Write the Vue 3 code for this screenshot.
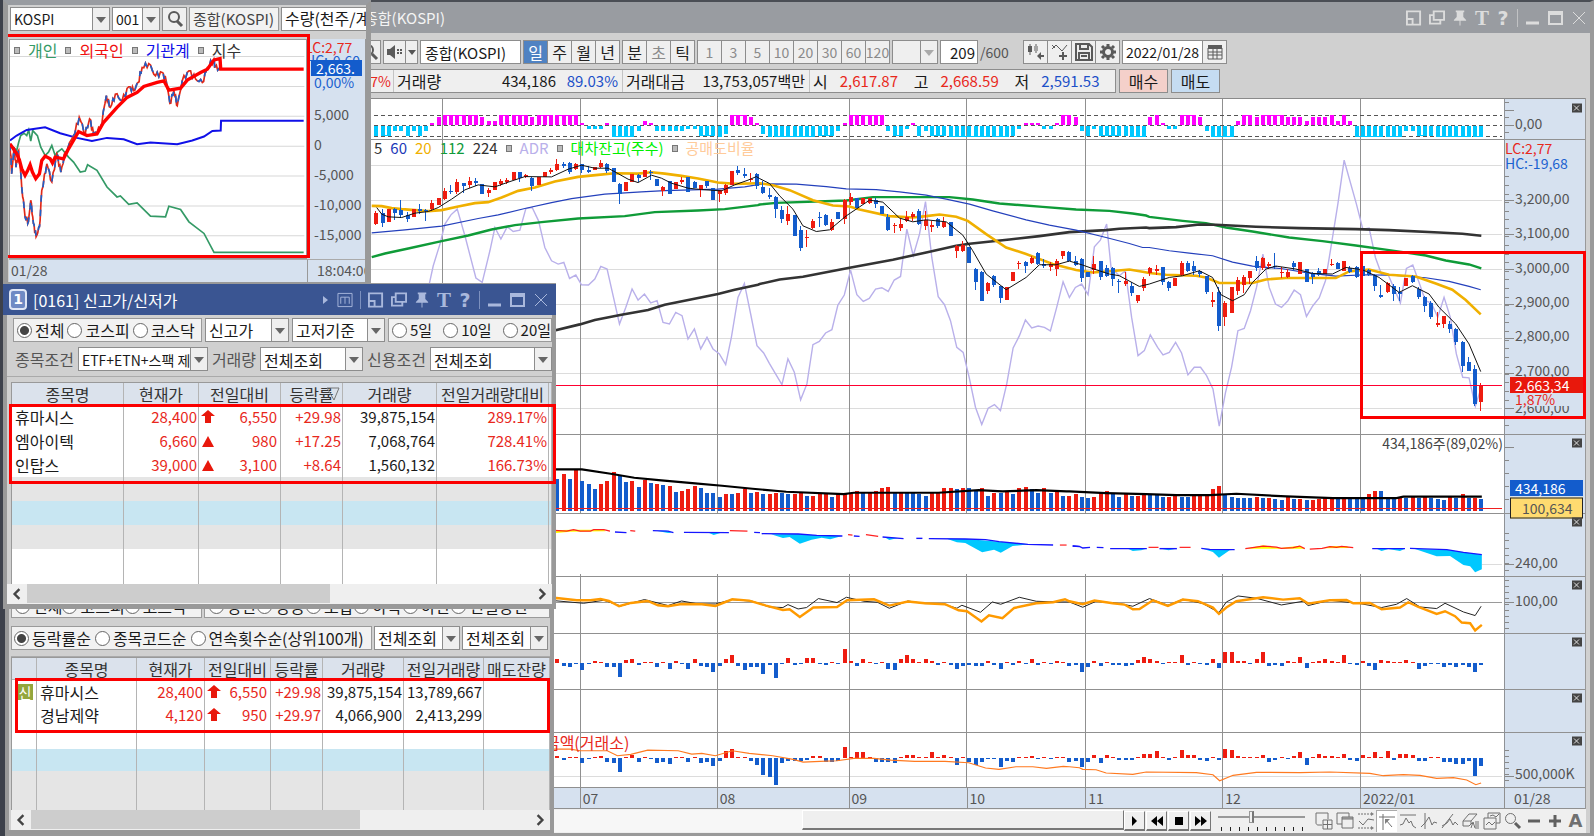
<script setup>
import { ref } from 'vue'

/* ---------- tables ---------- */
const highHead = ['종목명', '현재가', '전일대비', '등락률', '거래량', '전일거래량대비']
const highRows = [
  { name: '휴마시스', price: '28,400', limit: true, diff: '6,550', rate: '+29.98', vol: '39,875,154', ratio: '289.17%' },
  { name: '엠아이텍', price: '6,660', limit: false, diff: '980', rate: '+17.25', vol: '7,068,764', ratio: '728.41%' },
  { name: '인탑스', price: '39,000', limit: false, diff: '3,100', rate: '+8.64', vol: '1,560,132', ratio: '166.73%' }
]
const limitHead = ['', '종목명', '현재가', '전일대비', '등락률', '거래량', '전일거래량', '매도잔량']
const limitRows = [
  { badge: '신', name: '휴마시스', price: '28,400', diff: '6,550', rate: '+29.98', vol: '39,875,154', prev: '13,789,667' },
  { badge: '', name: '경남제약', price: '4,120', diff: '950', rate: '+29.97', vol: '4,066,900', prev: '2,413,299' }
]

const market = ref('전체')
const days = ref('')
const order = ref('등락률순')
const partA = ref('전체')
const partB = ref('')
const zoom = ref(38)

/* ---------- chart geometry ---------- */
const X0 = 376.3
const STEP = 6.249
const bx = i => X0 + STEP * i

/* Series are stored in tiles, about three units to a pixel. */
const tile = {
  a: [365, 140, 3], b: [760, 140, 3], c: [1150, 140, 3],
  d: [550, 420, 2.958], e: [1070, 420, 2.992]
}
const line = parts => Object.entries(parts).map(([k, s]) => {
  const [ox, oy, kx] = tile[k]
  return s.split(' ').map(p => {
    const [a, b] = p.split(',').map(Number)
    return (ox + a / kx).toFixed(1) + ',' + (oy + b / 3).toFixed(1)
  }).join(' ')
}).join(' ')

const ma20 = line({
  a: '20,195 50,196 80,202 110,205 150,208 190,211 230,208 280,197 330,187 370,184 410,170 460,150 510,140 570,122 640,108 700,102 750,97 820,98 860,94 900,98 950,105 1000,113 1060,125 1110,129 1180,127',
  b: '0,127 40,133 90,148 160,178 220,194 270,197 300,206 390,226 460,230 500,226 540,221 590,228 625,240 680,280 740,320 800,340 880,370 950,388 1000,395 1060,391 1110,386 1150,393',
  c: '0,397 50,402 140,405 170,410 210,427 310,427 350,416 410,412 560,412 600,392 660,386 720,402 800,407 860,428 910,447 950,478 995,521'
})
const ma60 = line({
  a: '20,276 120,267 230,256 340,233 400,222 480,203 560,185 620,173 720,160 830,153 900,149 1060,145 1140,138 1180,131',
  b: '30,129 110,130 200,137 260,144 350,146 420,153 500,163 560,175 630,190 700,210 800,237 870,253 950,268 1040,290 1110,308 1150,320',
  c: '0,320 60,330 120,337 190,345 250,364 310,376 400,384 480,397 560,406 650,402 740,404 830,411 900,422 960,437 995,447'
})
const ma112 = line({
  a: '20,349 60,338 130,323 230,301 310,284 380,266 450,253 530,244 640,233 780,226 870,214 1000,209 1080,205 1180,193',
  b: '0,191 50,186 260,179 340,169 570,169 640,176 720,188 850,198 950,206 1050,210 1120,218 1160,224',
  c: '0,228 100,240 170,247 230,260 310,272 420,290 520,301 620,314 720,328 830,344 890,359 960,371 997,383'
})
const ma224 = line({
  a: '560,572 645,551 690,538 770,522 850,508 900,492 1060,460 1110,447 1180,432',
  b: '0,430 60,416 130,408 270,381 400,357 500,335 590,315 630,309 750,296 840,286 930,274 1040,268 1080,264 1160,260',
  c: '0,262 80,259 150,251 200,252 320,258 450,262 620,265 720,268 870,275 940,279 997,285'
})
const ma5 = line({
  a: '35,200 50,220 70,228 110,230 150,217 190,212 220,200 260,175 300,147 340,132 390,138 430,124 480,107 560,108 610,85 650,73 690,82 730,82 760,98 790,115 820,125 860,103 890,112 920,127 970,142 1010,146 1070,150 1110,132 1150,118 1175,107',
  b: '0,113 30,128 60,165 100,205 130,255 170,272 210,267 260,225 330,178 370,184 420,232 460,243 500,237 560,243 610,283 640,330 680,400 740,447 800,410 840,372 890,372 930,361 970,373 1010,387 1050,400 1080,405 1140,437',
  c: '0,430 60,410 100,405 150,390 190,410 215,462 250,480 285,462 310,425 350,385 380,376 440,385 490,398 550,400 590,380 640,387 690,410 750,455 790,435 840,460 870,500 920,550 960,610 995,693'
})
const adr = line({
  a: '193,430 205,375 225,310 240,250 258,222 277,205 300,285 333,412 352,425 375,330 390,260 408,295 427,258 445,272 465,268 483,203 502,200 521,240 540,320 560,360 580,370 597,365 614,413 633,403 650,432 671,433 690,415 708,377 727,385 746,470 764,550 783,500 802,445 820,478 839,460 858,487 877,480 895,545 914,550 933,515 952,525 970,595 989,565 1008,625 1027,590 1045,625 1064,640 1083,672 1100,590 1120,470 1139,428 1158,520 1177,615',
  b: '12,637 29,668 67,732 85,655 104,695 123,778 142,730 160,612 179,602 198,577 217,567 235,493 254,463 273,388 292,462 311,482 329,473 348,445 367,441 386,452 404,418 423,407 442,265 461,345 480,280 498,182 517,350 536,468 555,492 573,540 592,620 611,635 629,710 648,800 667,852 686,803 705,792 723,810 742,730 761,622 780,585 798,538 817,562 836,556 855,560 873,571 892,500 911,423 930,470 948,440 967,430 986,462 1005,318 1023,298 1042,250 1055,380 1080,405 1098,390 1117,530 1136,645 1155,630',
  c: '3,583 25,620 41,643 60,635 79,605 97,637 116,703 135,680 154,680 172,705 191,745 210,857 229,755 247,680 266,570 285,563 304,510 322,440 341,340 360,440 379,490 397,500 416,480 435,448 454,462 472,527 491,495 510,472 529,420 547,310 566,190 585,58 622,190 641,265 660,262 679,350 697,400 716,400 754,487 772,383 791,373 810,425 829,480 847,487 866,530 885,470 904,530 922,640 941,710 960,712 979,797 997,740'
})

/* colour, body top, body bottom, high, low */
const candles = `r215,250,210,252 b215,247,205,258 r203,243 b204,217,200,237 b206,222,178,232 b222,235,212,243 r204,229 b205,210,190,220 b206,211,203,240 r187,205,178,210 r170,193 r150,174,142,178 b151,154,133,160 r123,153,114,158 b127,135,125,155 r121,131,108,140 b121,127,112,135 b128,160 r148,156,140,167 r124,148 r121,128,115,135 r117,124,112,130 r94,116 b94,110,93,122 r103,108,100,112 b110,135,108,150 r109,131 r93,109 r87,93,82,98 r68,86,53,90 b68,74,62,82 b66,92,64,98 r68,84,66,87 b70,88,68,97 b87,92,75,97 r77,88 r65,79,57,82 b68,90,66,95 b82,122 b128,160,126,190 r122,149 r100,123 b101,110,100,124 r88,107 b92,97,88,118 b113,135 r138,150,136,165 b121,160 r122,143 r116,124,108,130 b107,152 b124,140,120,142 r133,147,131,168 b121,135,120,140 b140,176 r148,158,147,183 r132,155,130,163 r90,132 b88,95,74,103 b98,104,82,110 r113,118,96,123 b98,135,97,145 b138,157,120,160 b161,168,142,174 b168,205,165,232 b207,235,195,247 r218,240,195,253 b222,285 b267,322,255,332 r288,293,268,318 r240,263,235,265 b228,232,214,260 b224,253,218,257 r245,267,235,272 b212,236 r176,235,175,250 r167,183,157,192 b172,202 r172,190 r172,186,170,190 b176,190,172,202 b194,218 b230,267,220,270 r252,257,248,277 r250,262,235,272 r230,240,210,243 r220,230,213,240 b210,250,205,252 r237,255,210,268 r253,258,240,275 b236,257,232,263 r245,260,228,262 b245,285 r315,330,312,352 r312,330,300,335 b320,368 b384,425,382,447 b395,480,390,480 r426,450,425,460 b406,432,404,440 b436,472,435,488 r440,477 r395,420 r368,371,360,385 b365,377,362,397 r352,367,345,370 b338,370,333,373 b370,377,355,383 r371,380,365,390 r361,385,355,405 r331,345,331,355 b334,361,331,363 b362,372,345,377 b355,413,352,423 b395,408 r370,388,345,400 b361,410,360,417 b382,405,372,410 b382,415,380,435 b420,425,415,457 r420,430,395,435 b437,457,425,465 r462,480,462,488 r415,443,410,450 r382,397,380,407 r386,390,372,402 b380,423,378,432 b424,443,420,450 r412,437 r368,403,362,405 b368,390,362,395 b376,390,362,402 b390,400,388,410 b407,453,405,460 r478,483,453,498 b455,555,440,570 r487,530,480,555 r440,517 r417,452,408,462 r408,432,402,457 r392,412,390,430 b361,383,345,390 r352,382,350,387 r371,377,365,385 b375,380,338,385 r393,398,380,412 r393,408,385,412 b368,378,362,390 r365,400 b384,423 b400,410,395,430 b390,402,383,405 r385,400 r370,374,355,376 b368,384,365,386 r361,390 b381,395,375,397 b380,408,375,412 b375,405,370,410 b388,403,385,405 b402,435,400,450 b462,468,432,473 r426,455,423,458 b435,460,430,480 b455,460,440,480 r413,437 b405,424,402,427 b445,468,440,475 b468,497,465,515 b486,528,482,535 r546,552,515,560 r526,550,525,562 b550,564,540,577 b565,603,563,613 b603,675,600,693 b663,690,650,690 b685,790,672,797 r733,783,728,810`
  .split(' ').map((s, i) => {
    const [t, b, h = t, l = b] = s.slice(1).split(',').map(Number)
    return { up: s[0] === 'r', x: bx(i), t: 140 + t / 3, b: 140 + b / 3, h: 140 + h / 3, l: 140 + l / 3 }
  })

/* signal strip: [height, count] */
const signal = [[-10, 3], [-5, 2], [-10, 1], [-5, 1], [-10, 1], [-5, 1], [2, 1], [8, 1], [10, 6], [8, 1], [4, 2], [10, 5], [8, 1], [10, 7], [2, 1], [-3, 3], [2, 1], [-11, 4], [-5, 1], [4, 1], [2, 1], [-5, 5], [-3, 2], [-10, 3], [-11, 1], [-8, 1], [10, 3], [8, 1], [2, 1], [-8, 1], [-11, 8], [-10, 3], [-5, 1], [2, 1], [10, 6], [-5, 1], [-10, 2], [-3, 1], [2, 1], [-10, 1], [-5, 1], [-10, 3], [-11, 10], [-10, 1], [-3, 1], [2, 3], [-3, 2], [2, 1], [10, 2], [8, 1], [-5, 1], [-10, 1], [-3, 1], [-10, 5], [-11, 3], [8, 1], [10, 1], [2, 1], [-3, 2], [10, 3], [8, 1], [-5, 1], [-11, 4], [4, 1], [10, 2], [8, 1], [10, 4], [8, 3], [4, 1], [8, 3], [10, 1], [4, 1], [10, 1], [4, 1], [-11, 8], [-5, 2], [-10, 3], [-11, 8]]
  .flatMap(([v, n]) => Array(n).fill(v))
  .map((v, i, all) => ({ v, x: bx(i), join: Math.abs(v) >= 10 && all[i + 1] === v && i % 7 !== 0 }))

/* volume bars start at the 30th session */
const volume = `b177 r162 b177 r150 b181 b192 b207 r192 r181 r155 b168 b184 r181 b199 r179 b188 r190 b195 r196 b214 r211 r207 r196 b204 b218 b218 b230 r222 b222 r219 r207 b219 r214 b222 r222 r219 b218 b222 r222 r218 b226 r226 r219 r219 b230 r222 r220 r220 r211 b219 r219 r211 r203 r199 b219 r219 b219 b219 b222 b226 r219 r219 r203 r203 b207 r203 b203 b208 r203 b226 r219 b218 r214 b222 r203 r199 b207 b219 r203 b219 r211 b226 r226 r222 b229 b234 r229 r219 r211 b219 b229 r219 b226 r226 r222 b222 b225 b229 r229 r226 b229 b229 r225 r226 r226 r207 r196 b222 b229 b234 b234 b234 r229 b234 r234 b237 b240 r229 b237 r237 b240 r240 r237 r234 r230 b234 r230 b230 b230 b232 r222 r211 b211 b234 b237 r230 b234 r230 b234 r230 b234 b237 b240 r230 b234 r222 b234 r234 b237`
  .split(' ').map((s, i) => ({ up: s[0] === 'r', x: bx(i + 29), y: 420 + s.slice(1) / 3 }))

const volumeAvg = line({
  d: '0,147 95,147 180,160 250,172 330,180 430,189 510,196 600,205 700,214 870,221 900,217 1150,217 1270,209 1340,213 1440,209 1530,213',
  e: '0,213 110,218 230,221 320,224 420,224 500,220 650,228 790,233 980,233 1000,229 1235,229'
})

const flowBars = (list, zero) => list.map((v, i) => ({
  up: v > 0, x: bx(i + 29), y: v > 0 ? zero - v / 3 : zero, h: Math.max(1, Math.abs(v) / 3)
}))
const flowA = flowBars([13, -8, -12, -2, -20, -2, 8, 5, -12, -12, -43, 9, 13, -6, 4, 4, -12, 4, -17, 8, -2, -16, 13, -8, -10, -28, -9, 13, 25, -9, -20, -12, -12, -32, -5, -46, -2, 17, -6, -2, 17, 17, -2, -5, 4, -2, 43, 8, -9, 13, 5, -3, 4, -17, -20, 13, 25, 13, 5, 13, 8, -5, 3, -5, -17, -9, -5, -8, -8, 8, -5, -17, 4, -5, 8, -2, 13, -5, 5, -3, 8, 4, -8, -6, -28, -12, 8, -9, 4, -5, -5, -8, -5, 9, 20, 13, 8, -2, 4, 4, 25, -5, 4, -2, -5, 13, -13, 33, 33, 8, 8, -2, 13, 33, -9, -5, -9, 8, 4, 20, -13, 4, 8, 13, 8, 4, 25, -2, -5, 8, -8, -20, 9, 8, 4, 4, 9, 4, -16, -8, -2, -2, -12, -5, -12, -5, -12, -28, -5], 663)
const flowB = flowBars([5, -5, 3, 3, -16, -4, 3, 5, -13, -16, -42, 3, 10, -13, 3, -4, -16, -13, -17, 3, 3, -13, 3, -16, -13, -24, -8, 20, 28, 3, 3, -8, -20, -50, -58, -80, -16, -8, -9, -10, -5, 5, 5, -13, -13, -10, 33, 3, 17, 17, 3, -13, -13, -13, -16, 4, 9, 9, 3, 3, 17, 3, 9, 3, -20, 3, -13, -20, -13, -4, -4, -28, -9, -13, 3, 3, 5, -4, 3, -4, 3, 3, -12, -10, -28, -12, 9, -16, 9, 3, -5, -5, -5, 3, 13, 13, 21, 3, -5, 4, 25, 9, 9, -5, -9, 3, -5, 28, 25, 5, 3, 4, 3, 9, -12, -5, 3, -4, 5, 17, -20, 3, 13, 5, 5, 4, 13, -5, -9, 9, 4, 17, 3, 21, -5, 13, 13, 9, -9, -9, 3, 3, -13, -12, -17, -17, -9, -55, -24], 758)

const ratioOrange = line({
  d: '0,534 20,533 80,540 120,540 150,536 175,542 205,558 240,548 290,542 320,555 350,558 390,551 450,552 490,557 540,537 590,541 640,556 690,569 710,567 740,590 780,562 850,560 880,540 960,537 1005,556 1060,544 1110,549 1170,552 1210,570 1235,573 1278,604 1300,585 1340,594 1375,563 1440,549 1490,546 1525,537',
  e: '0,543 40,552 75,541 130,549 165,553 190,567 210,566 250,540 295,557 340,538 385,543 430,562 448,581 470,562 500,543 580,531 640,538 690,534 715,550 780,540 830,539 850,549 900,548 935,567 990,562 1015,546 1045,560 1100,581 1125,573 1155,588 1175,607 1200,609 1215,631 1235,614'
})
const ratioBlack = line({
  d: '0,540 100,549 160,540 210,557 280,538 350,556 390,542 440,551 490,551 540,538 600,543 650,560 690,562 705,553 735,566 760,562 795,535 850,547 878,531 930,543 970,546 1005,564 1060,542 1110,550 1160,550 1205,564 1220,555 1275,576 1310,545 1335,552 1390,531 1440,543 1500,545',
  e: '0,545 40,561 80,543 150,550 190,558 240,535 295,555 340,537 400,550 448,577 470,545 505,527 560,534 635,554 700,543 715,556 780,540 870,550 935,562 980,552 1010,535 1050,560 1100,565 1125,549 1180,575 1215,586 1233,558'
})
const netOrange = line({
  d: '0,987 60,987 90,992 170,992 200,1007 240,1003 290,990 380,992 420,1002 450,1000 490,1007 540,992 590,1000 660,1007 720,1018 750,1026 800,1024 850,1022 900,1015 960,1015 1010,1020 1080,1024 1170,1024 1240,1028 1290,1044 1330,1048 1380,1040 1430,1040 1470,1045 1520,1039',
  e: '0,1040 30,1043 40,1048 80,1049 110,1059 190,1063 230,1056 380,1058 430,1064 450,1082 490,1066 560,1057 690,1058 780,1056 900,1060 940,1067 1000,1064 1050,1066 1100,1075 1150,1073 1190,1080 1217,1094 1233,1089'
})

const coolAreas = [
  { d: '655,342 690,353 710,350 740,370 775,358 805,352 830,357 865,347 790,345 735,341' },
  { d: '1175,355 1205,366 1230,368 1280,396 1315,388 1335,397 1370,377 1420,372 1330,364 1235,356' },
  { d: '315,331 350,338 362,337 345,331' }, { d: '990,350 1005,359 1030,353' }, { d: '470,337 485,344 505,338' },
  { e: '175,385 190,392 215,390 230,385' }, { e: '400,385 430,395 448,412 480,390 495,388' },
  { e: '275,385 297,390 320,385' }, { e: '920,385 935,392 955,386 990,392 1005,385' },
  { e: '1035,386 1100,408 1140,407 1180,434 1200,438 1215,456 1235,447 1235,403 1180,396 1130,388' }
].map(line)
const warmAreas = [{ d: '0,330 70,328 160,328 165,333 60,334 20,338 0,338' }, { e: '527,385 580,375 630,383 690,376 705,385' }, { e: '760,384 785,377 830,377 840,383' }].map(line)
const blueRuns = [{ d: '193,335 227,337' }, { d: '305,331 350,332 366,337' }, { d: '397,336 530,337' }, { d: '605,336 622,337' }, { d: '627,340 735,341 790,345 866,347' }, { d: '900,347 917,348' }, { d: '985,350 1047,355' }, { d: '1085,354 1103,354' }, { d: '1122,355 1230,356 1290,358 1330,364 1415,372 1490,374' }, { d: '1548,377 1568,379' }, { e: '10,377 30,378 40,383 62,381' }, { e: '82,381 102,382' }, { e: '122,385 232,385' }, { e: '270,385 322,385' }, { e: '395,384 420,387 495,388' }, { e: '907,385 1005,385' }, { e: '1020,384 1130,388 1180,396 1235,403' }].map(line)
const redRuns = [{ d: '0,329 50,332 70,328 90,332 120,332 130,328 160,328 178,332' }, { d: '238,331 253,332' }, { d: '533,331 585,332' }, { d: '883,343 896,344' }, { d: '936,343 972,348' }, { d: '1510,374 1530,374' }, { e: '237,381 267,381' }, { e: '330,381 363,381' }, { e: '527,385 580,377 620,380 635,384 670,382 690,377 705,385' }, { e: '720,386 757,384 780,379 800,381 815,378 850,382' }].map(line)

const months = [442, 580, 717, 849, 967, 1086, 1223, 1361]
const monthLabels = [[580, '07'], [717, '08'], [849, '09'], [967, '10'], [1086, '11'], [1223, '12'], [1361, '2022/01']]
const grid = [164, 199, 233, 268, 303, 337, 372, 407]
const seams = [138, 433, 513, 576, 633, 689, 732]

const axisLabels = [
  [122, '0,00'], [197, '3,200,00'], [231, '3,100,00'], [266, '3,000,00'], [300, '2,900,00'], [334, '2,800,00'],
  [369, '2,700,00'], [406, '2,600,00'], [562, '240,00'], [600, '100,00'], [773, '500,000K']
]
const closers = [107, 442, 522, 585, 642, 698, 741]
const pct = y => ((y - 98) / 689 * 100).toFixed(2) + '%'
const range = (a, b, s) => Array.from({ length: Math.floor((b - a) / s) + 1 }, (_, i) => a + i * s)
const minor = [...range(102, 132, 7.5), ...range(176, 430, 8.6), ...range(447, 508, 13), ...range(533, 573, 7.5), ...range(580, 630, 6), ...range(750, 785, 6)]
const major = [109, 124, 199, 233, 268, 303, 337, 372, 407, 447, 564, 602, 776]

/* ---------- investor chart, three units to a pixel ---------- */
const idx = '30,430 35,520 42,440 48,500 56,450 65,560 75,650 85,665 92,600 100,670 108,710 118,680 125,570 140,490 155,545 170,460 182,515 195,455 220,405 237,350 255,400 268,355 280,400 300,385 318,285 330,320 345,280 365,300 385,258 400,270 413,245 425,200 445,188 465,225 485,215 497,240 508,308 520,270 530,315 545,240 565,210 585,235 605,245 620,200 640,175 642,200 660,205'
  .split(' ').map(p => p.split(',').map(Number))
const indexLine = idx.flatMap(([x, y], i) => {
  const n = idx[i + 1]
  if (!n) return [[x, y]]
  return [0, 1, 2, 3].map(k => [x + (n[0] - x) * k / 4, y + (n[1] - y) * k / 4 + (k ? 9 * Math.sin(i * 7.3 + k * 2.6) : 0)])
}).map(p => p.map(v => v.toFixed(0)).join(',')).join(' ')
const avgLine = '30,430 50,460 58,478 65,505 75,525 82,512 90,493 97,515 107,535 118,520 125,480 135,467 150,475 157,488 165,470 190,475 205,445 235,393 260,405 290,400 310,365 350,320 380,290 410,275 430,257 470,245 490,240 505,268 540,262 560,238 600,215 620,205 640,177 658,173 660,205 908,205'
const instLine = '30,420 50,405 80,388 135,380 180,398 230,412 275,421 320,412 370,416 410,431 450,426 530,431 575,420 610,408 635,391 660,390 661,360 908,360'
const personLine = '32,432 50,450 56,425 62,405 72,398 80,405 86,388 92,422 98,390 112,405 122,440 135,465 145,455 155,435 165,465 172,455 185,445 205,470 220,485 240,515 255,512 262,493 290,510 320,560 350,590 360,587 385,612 410,608 450,648 495,650 505,618 540,628 565,665 610,700 640,757 908,757'
const miniLabels = [[114, '5,000'], [144, '0'], [174, '-5,000'], [204, '-10,000'], [234, '-15,000']]

/* ---------- toolbar ---------- */
const periods = ['일', '주', '월', '년']
const units = ['분', '초', '틱']
const steps = ['1', '3', '5', '10', '20', '30', '60', '120']

const winIcons = {
  restore: 'M1 8V1h14v14H8M1 9h6v6H1z',
  copy: 'M5 1h11v9H5zM5 5H1v9h11v-4',
  max: 'M1 2h13v12H1zM1 4h13',
  min: 'M1 13h13',
  close: 'M2 2l12 12M14 2L2 14'
}
const tools = [
  { name: '창 추가', d: 'M7 13H3c-1 0-2-1-2-2V1h12v6M8 8h9v9H8zM12.500 8v9M8 12.500h9' },
  { name: '창 겹치기', d: 'M6 12H1V1h12v4M6 5h11v11H6zM6 7h11M6 6h11' },
  { name: '영역', d: 'M2 9l4 4 5-6 6 1', dash: 'M1 2h15M1 16h15', head: 'M14 0l3 2-3 2zM14 14l3 2-3 2z' },
  { name: '기준선', d: 'M5 1v16M1 4h16M8 7l6 7', head: 'M7 6h5l-5 5z', on: true },
  { name: '수평선', d: 'M1 3h16M1 13l3-1 3-6 3 5 2-2 2 5 3 2' },
  { name: '수직선', d: 'M5 1v16M1 15l4-4 4-6 3 8 2-3 3 1' },
  { name: '추세선', d: 'M1 16L12 2M1 14l5-3 3-4 3 6 2-3 3 3' },
  { name: '전체 지우기', d: 'M1 9l6-7h8l-6 7zM1 9v5h6l3-3M9 9v3M9 16l2-6 2 6M14 9v8M16 9v8' },
  { name: '그림', d: 'M5 6V1h12v10h-4M1 6h12v11H1zM3 13l3-3 3 3 3-3M7 4l3-1 3 2 3-3' },
  { name: '돋보기', d: 'M11.500 6.500a5 5 0 1 1-10 0 5 5 0 0 1 10 0z', mid: 'M11 11l5 5' },
  { name: '축소', thick: 'M3 9h12' },
  { name: '확대', thick: 'M3 9h12M9 3v12' }
]
</script>

<template>
  <div class="desktop">
    <!-- chart window -->
    <section class="win chart-win">
      <header class="bar chart-title">
        <h1>종합(KOSPI)</h1>
        <div class="ctl">
          <button aria-label="창 복원"><svg viewBox="0 0 17 16"><path :d="winIcons.restore" /></svg></button>
          <button aria-label="창 복사"><svg viewBox="0 0 17 16"><path :d="winIcons.copy" /></svg></button>
          <button aria-label="고정"><svg viewBox="0 0 17 16"><path class="fill" d="M4 0h9v2h-1v5l3 3v1H9v5H8v-5H2v-1l3-3V2H4z" /></svg></button>
          <button class="serif">T</button>
          <button class="quest">?</button>
          <i class="sep"></i>
          <button aria-label="최소화"><svg viewBox="0 0 16 16"><path class="thick" :d="winIcons.min" /></svg></button>
          <button aria-label="최대화"><svg viewBox="0 0 16 16"><path :d="winIcons.max" /></svg></button>
          <button aria-label="닫기"><svg viewBox="0 0 16 16"><path class="thin" :d="winIcons.close" /></svg></button>
        </div>
      </header>

      <div class="toolbar">
        <button class="tb w23" aria-label="검색"><svg viewBox="0 0 18 18"><circle cx="7" cy="7" r="5" /><path d="M11 11l5 5" stroke-width="3" /></svg></button>
        <span class="joined">
          <button class="tb w23" aria-label="소리"><svg viewBox="0 0 18 18"><path class="fill" d="M1 6h3l5-4v14l-5-4H1z" /><path stroke-dasharray="2 1" d="M11 7h6M11 10h6" /></svg></button>
          <button class="tb w12" aria-label="소리 메뉴"><i class="down"></i></button>
        </span>
        <input class="box name" aria-label="종목명" value="종합(KOSPI)" />
        <span class="joined">
          <button v-for="(p, i) in periods" :key="p" class="tb w24" :class="{ on: i === 0 }">{{ p }}</button>
        </span>
        <span class="joined">
          <button v-for="p in units" :key="p" class="tb w24" :class="{ dim: p === '초' }">{{ p }}</button>
        </span>
        <span class="joined nums">
          <button v-for="p in steps" :key="p" class="tb w24 dim">{{ p }}</button>
        </span>
        <span class="sel off w44"><select aria-label="주기" disabled><option></option></select><i></i></span>
        <input class="box count" aria-label="표시 개수" value="209" />
        <span class="total">/600</span>
        <span class="joined icons">
          <button class="tb w24" aria-label="차트 추가"><svg viewBox="0 0 18 18"><path d="M3 1v11M9 1v9" stroke-width="1" /><path class="fill" d="M1 3h4v6H1z" /><path class="soft" d="M7 3h4v5H7z" /><path d="M17 13h-4" stroke-width="2" /><path class="fill" d="M10 13l4-4v8z" /></svg></button>
          <button class="tb w24" aria-label="지표 추가"><svg viewBox="0 0 18 18"><path class="hair" d="M1 6l4-4 6 6 5-6M1 2l3 3" /><path d="M12 9v8M8 13h8" /></svg></button>
          <button class="tb w24" aria-label="저장"><svg viewBox="0 0 18 18"><path d="M1 1h13l3 3v13H1zM5 1v5h8V1M4 17v-7h10v7M6 13h6" /></svg></button>
          <button class="tb w24" aria-label="설정"><svg viewBox="0 0 18 18"><g class="gear"><circle cx="9" cy="9" r="4.500" /><path d="M9 1v3M9 14v3M1 9h3M14 9h3M3 3l2 2M13 13l2 2M15 3l-2 2M3 15l2-2" /></g></svg></button>
        </span>
        <span class="joined">
          <input class="box date" aria-label="날짜" value="2022/01/28" />
          <button class="tb w24" aria-label="달력"><svg viewBox="0 0 18 18"><path class="fill" d="M2 2h14v4H2z" /><path class="hair" d="M2 5v11h14V5M2 9h14M2 12h14M7 5v11M11 5v11" /></svg></button>
        </span>
      </div>

      <div class="info-row">
        <dl class="info">
          <div class="c1"><dt class="red">1.87%</dt></div>
          <div class="c2"><dt>거래량</dt><dd>434,186</dd><dd class="blue">89.03%</dd></div>
          <div class="c3"><dt>거래대금</dt><dd>13,753,057백만</dd></div>
          <div class="c4"><dt>시</dt><dd class="red">2,617.87</dd><dt>고</dt><dd class="red">2,668.59</dd><dt>저</dt><dd class="blue">2,591.53</dd></div>
        </dl>
        <button class="trade buy">매수</button>
        <button class="trade sell">매도</button>
      </div>

      <div class="chart">
        <div class="plot">
          <svg viewBox="371 98 1134 689" preserveAspectRatio="none">
            <g class="crisp">
              <path v-for="y in grid" :key="'g' + y" class="grid" :d="`M371 ${y + .5}H1503`" />
              <path class="grid" d="M1483 564.500h20M371 776.500H1503" />
              <path class="midline" d="M371 602.500H1503" />
              <path v-for="y in seams" :key="'s' + y" class="seam" :d="`M371 ${y + .5}H1505`" />
              <path v-for="x in months" :key="'m' + x" class="seam" :d="`M${x + .5} 98V513M${x + .5} 574V787`" />
              <path class="dash" d="M374 114.500H1503M374 124.500H1503M374 135.500H1503" />
              <g v-for="(s, i) in signal" :key="'n' + i" :class="s.v > 0 ? 'mag' : 'cyan'">
                <rect :x="s.x - 2" :y="s.v > 0 ? 124 - s.v : 125" width="4" :height="Math.abs(s.v)" />
                <rect v-if="s.join" :x="s.x" :y="s.v > 0 ? 114 : 124 - s.v" :width="STEP" height="1" />
              </g>
            </g>
            <polyline class="adr" :points="adr" />
            <polyline class="m112" :points="ma112" />
            <polyline class="m224" :points="ma224" />
            <polyline class="m60" :points="ma60" />
            <polyline class="m20" :points="ma20" />
            <g class="crisp">
              <g v-for="(c, i) in candles" :key="'c' + i" :class="c.up ? 'up' : 'dn'">
                <rect :x="c.x - 2" :y="c.t" width="4" :height="c.b - c.t" />
                <rect :x="c.x - 1" :y="c.h" width="1" :height="c.l - c.h" />
              </g>
            </g>
            <polyline class="m5" :points="ma5" />
            <path class="last crisp" d="M371 384.500H1503" />

            <g class="crisp">
              <rect v-for="(v, i) in volume" :key="'v' + i" :class="v.up ? 'up' : 'dn'" :x="v.x - 2" :y="v.y" width="4" :height="511 - v.y" />
              <path class="vline" d="M371 508.500H1503" />
            </g>
            <polyline class="vavg" :points="volumeAvg" />

            <polygon v-for="(a, i) in coolAreas" :key="'ca' + i" class="cyan" :points="a" />
            <polygon v-for="(a, i) in warmAreas" :key="'wa' + i" class="yel" :points="a" />
            <polyline v-for="(a, i) in blueRuns" :key="'br' + i" class="brun" :points="a" />
            <polyline v-for="(a, i) in redRuns" :key="'rr' + i" class="rrun" :points="a" />

            <polyline class="rblack" :points="ratioBlack" />
            <polyline class="rorange" :points="ratioOrange" />

            <g class="crisp">
              <rect v-for="(v, i) in flowA" :key="'fa' + i" :class="v.up ? 'up' : 'dn'" :x="v.x - 2" :y="v.y" width="4" :height="v.h" />
              <rect v-for="(v, i) in flowB" :key="'fb' + i" :class="v.up ? 'up' : 'dn'" :x="v.x - 2" :y="v.y" width="4" :height="v.h" />
            </g>
            <polyline class="norange" :points="netOrange" />
          </svg>
          <div class="legend main-legend">
            <span>5</span><span class="l60">60</span><span class="l20">20</span><span class="l112">112</span><span>224</span>
            <i></i><span class="ladr">ADR</span><i></i><span class="llend">대차잔고(주수)</span><i></i><span class="lshort">공매도비율</span>
          </div>
          <span class="vol-note">434,186주(89,02%)</span>
          <span class="net-note">순매수금액(거래소)</span>
        </div>
        <div class="axis">
          <svg viewBox="0 98 81 689" preserveAspectRatio="none" class="crisp">
            <path v-for="y in minor" :key="'a' + y" class="tick" :d="`M0 ${y}h4`" />
            <path v-for="y in major" :key="'b' + y" class="tick" :d="`M0 ${y + .5}h9`" />
            <path v-for="y in seams" :key="'s' + y" class="seam" :d="`M0 ${y + .5}h81`" />
          </svg>
          <span v-for="l in axisLabels" :key="l[1]" class="lab" :style="{ top: pct(l[0]) }">{{ l[1] }}</span>
          <span class="lab edge red" :style="{ top: pct(147) }">LC:2,77</span>
          <span class="lab edge blue" :style="{ top: pct(162) }">HC:-19,68</span>
          <span class="lab rate" :style="{ top: pct(398) }">1,87%</span>
          <span class="tag tag-red" :style="{ top: pct(384) }">2,663,34</span>
          <span class="tag tag-blue" :style="{ top: pct(488) }">434,186</span>
          <span class="tag tag-yellow" :style="{ top: pct(508) }">100,634</span>
          <button v-for="y in closers" :key="y" class="mini-x" aria-label="지표 닫기" :style="{ top: pct(y) }"><svg viewBox="0 0 10 9"><path d="M2 2l5 5M7 2L2 7" /></svg></button>
        </div>
        <div class="dates">
          <span v-for="m in monthLabels" :key="m[1]" :style="{ left: ((m[0] - 371) / 1134 * 100).toFixed(2) + '%' }">{{ m[1] }}</span>
        </div>
        <div class="today">01/28</div>
        <div class="mark mark-chart"></div>
      </div>

      <footer class="foot">
        <div class="track"><div class="thumb"></div></div>
        <div class="play">
          <button aria-label="재생"><svg viewBox="0 0 16 16"><path d="M5 3l5 5-5 5z" /></svg></button>
          <button aria-label="뒤로"><svg viewBox="0 0 16 16"><path d="M8 3v10L2 8zM14 3v10L8 8z" /></svg></button>
          <button aria-label="정지"><svg viewBox="0 0 16 16"><path d="M4 4h8v8H4z" /></svg></button>
          <button aria-label="앞으로"><svg viewBox="0 0 16 16"><path d="M2 3v10l6-5zM8 3v10l6-5z" /></svg></button>
        </div>
        <div class="slide"><input v-model="zoom" type="range" min="0" max="100" aria-label="확대 비율" /></div>
        <div class="tools">
          <button v-for="t in tools" :key="t.name" :aria-label="t.name" :class="{ pressed: t.on }">
            <svg viewBox="0 0 18 18">
              <path v-if="t.d" :d="t.d" />
              <path v-if="t.dash" :d="t.dash" stroke-dasharray="2 1" />
              <path v-if="t.head" class="fill" :d="t.head" />
              <path v-if="t.mid" class="thick" :d="t.mid" />
              <path v-if="t.thick" class="thick" :d="t.thick" />
            </svg>
          </button>
          <button class="letter">A</button>
        </div>
      </footer>
    </section>

    <!-- limit-price window -->
    <section class="win limit-win">
      <div class="row">
        <div class="group g1">
          <label v-for="o in ['전체', '코스피', '코스닥']" :key="o"><input v-model="partA" type="radio" name="pa" value="" />{{ o }}</label>
        </div>
        <div class="group g2">
          <label v-for="o in ['상한', '상승', '보합', '하락', '하한', '전일상한']" :key="o"><input v-model="partB" type="radio" name="pb" :value="o" />{{ o }}</label>
        </div>
      </div>
      <div class="row second">
        <div class="group g3">
          <label v-for="o in ['등락률순', '종목코드순', '연속횟수순(상위100개)']" :key="o"><input v-model="order" type="radio" name="order" :value="o" />{{ o }}</label>
        </div>
        <span class="sel w86"><select aria-label="조회 구분"><option>전체조회</option></select><i></i></span>
        <span class="sel w86"><select aria-label="조회 조건"><option>전체조회</option></select><i></i></span>
      </div>
      <div class="grid-box">
        <table class="limit">
          <colgroup><col class="k0" /><col class="k1" /><col class="k2" /><col class="k3" /><col class="k4" /><col class="k5" /><col class="k6" /><col /></colgroup>
          <thead><tr><th v-for="h in limitHead" :key="h">{{ h }}</th></tr></thead>
          <tbody>
            <tr v-for="r in limitRows" :key="r.name">
              <td class="tagcell"><b v-if="r.badge">{{ r.badge }}</b></td>
              <td class="nm">{{ r.name }}</td>
              <td class="red">{{ r.price }}</td>
              <td class="red"><span class="diff"><svg viewBox="0 0 14 14"><path d="M7 0l7 6h-4v7H4V6H0z" /></svg>{{ r.diff }}</span></td>
              <td class="red">{{ r.rate }}</td>
              <td>{{ r.vol }}</td><td>{{ r.prev }}</td><td></td>
            </tr>
            <tr><td v-for="n in 8" :key="n"></td></tr>
            <tr class="sky"><td v-for="n in 8" :key="n"></td></tr>
            <tr class="ash tall"><td v-for="n in 8" :key="n"></td></tr>
          </tbody>
        </table>
      </div>
      <div class="hscroll"><button aria-label="왼쪽"><svg viewBox="0 0 10 10"><path d="M7 1L3 5l4 4" /></svg></button><div><i class="t2"></i></div><button aria-label="오른쪽"><svg viewBox="0 0 10 10"><path d="M3 1l4 4-4 4" /></svg></button></div>
      <div class="mark mark-limit"></div>
    </section>

    <!-- investor window -->
    <section class="win inv-win">
      <div class="row">
        <span class="sel w100"><select aria-label="시장"><option>KOSPI</option></select><i></i></span>
        <span class="sel w48"><select aria-label="코드"><option>001</option></select><i></i></span>
        <button class="tb w24" aria-label="검색"><svg viewBox="0 0 18 18"><circle cx="8" cy="7" r="5" /><path d="M11 11l5 5" stroke-width="3" /></svg></button>
        <span class="group name">종합(KOSPI)</span>
        <span class="box unit">수량(천주/계약)</span>
      </div>
      <div class="mini">
        <div class="mini-plot">
          <svg viewBox="30 117 885 657" preserveAspectRatio="none">
            <path class="grid3" d="M30 167H910M30 257H910M30 347H910M30 437H910M30 527H910M30 617H910M30 707H910" />
            <polyline class="p-green" :points="personLine" />
            <polyline class="p-blue" :points="instLine" />
            <polyline class="p-thin" :points="indexLine" />
            <polyline class="p-thinb" :points="indexLine" />
            <polyline class="p-red" :points="avgLine" />
          </svg>
          <div class="legend mini-legend"><i></i><span class="c-g">개인</span><i></i><span class="c-r">외국인</span><i></i><span class="c-b">기관계</span><i></i><span>지수</span></div>
        </div>
        <div class="mini-axis">
          <span class="lab edge red" :style="{ top: '8px' }">LC:2,77</span>
          <span class="lab edge blue" :style="{ top: '21px' }">HC:-0,60</span>
          <span class="tag tag-blue" :style="{ top: '29px' }">2,663.</span>
          <span class="lab blue" :style="{ top: '43px' }">0,00%</span>
          <span v-for="l in miniLabels" :key="l[1]" class="lab" :style="{ top: (l[0] - 39) + 'px' }">{{ l[1] }}</span>
        </div>
        <div class="mini-date">01/28</div>
        <div class="mini-date mini-time">18:04:00</div>
      </div>
      <div class="mark mark-inv"></div>
    </section>

    <!-- new high / new low window -->
    <section class="win high-win">
      <header class="bar high-title">
        <b class="no">1</b>
        <h2>[0161] 신고가/신저가</h2>
        <div class="ctl">
          <button class="slim" aria-label="메뉴"><svg viewBox="0 0 8 16"><path class="fill" d="M1 4l5 4-5 4z" /></svg></button>
          <button aria-label="메모"><svg viewBox="0 0 17 16"><path class="thin" d="M1 1h15v14H1zM4 12V5h9v7M8.500 5v7" /></svg></button>
          <i class="sep"></i>
          <button aria-label="창 복원"><svg viewBox="0 0 17 16"><path :d="winIcons.restore" /></svg></button>
          <button aria-label="창 복사"><svg viewBox="0 0 17 16"><path :d="winIcons.copy" /></svg></button>
          <button aria-label="고정"><svg viewBox="0 0 17 16"><path class="fill" d="M4 0h9v2h-1v5l3 3v1H9v5H8v-5H2v-1l3-3V2H4z" /></svg></button>
          <button class="serif">T</button>
          <button class="quest">?</button>
          <i class="sep"></i>
          <button aria-label="최소화"><svg viewBox="0 0 16 16"><path class="thick" :d="winIcons.min" /></svg></button>
          <button aria-label="최대화"><svg viewBox="0 0 16 16"><path :d="winIcons.max" /></svg></button>
          <button aria-label="닫기"><svg viewBox="0 0 16 16"><path class="thin" :d="winIcons.close" /></svg></button>
        </div>
      </header>
      <div class="row r1">
        <div class="group g4">
          <label v-for="o in ['전체', '코스피', '코스닥']" :key="o"><input v-model="market" type="radio" name="market" :value="o" />{{ o }}</label>
        </div>
        <span class="sel w84"><select aria-label="신고가 구분"><option>신고가</option></select><i></i></span>
        <span class="sel w94"><select aria-label="고저 기준"><option>고저기준</option></select><i></i></span>
        <div class="group g5">
          <label v-for="o in ['5일', '10일', '20일']" :key="o"><input v-model="days" type="radio" name="days" :value="o" />{{ o }}</label>
        </div>
      </div>
      <div class="row r2">
        <label for="cond">종목조건</label><span class="sel w130 etf"><select id="cond"><option>ETF+ETN+스팩 제외</option></select><i></i></span>
        <label for="volq">거래량</label><span class="sel w103"><select id="volq"><option>전체조회</option></select><i></i></span>
        <label for="cred">신용조건</label><span class="sel grow"><select id="cred"><option>전체조회</option></select><i></i></span>
      </div>
      <div class="grid-box">
        <table class="high">
          <colgroup><col class="h0" /><col class="h1" /><col class="h2" /><col class="h3" /><col class="h4" /><col class="h5" /><col /></colgroup>
          <thead><tr>
            <th v-for="h in highHead" :key="h">{{ h }}<svg v-if="h === '등락률'" class="sort" viewBox="0 0 14 14"><path d="M1 1h12L8 13z" /></svg></th>
            <th></th>
          </tr></thead>
          <tbody>
            <tr v-for="r in highRows" :key="r.name">
              <td class="nm">{{ r.name }}</td>
              <td class="red">{{ r.price }}</td>
              <td class="red"><span class="diff"><svg viewBox="0 0 14 14"><path :d="r.limit ? 'M7 0l7 6h-4v7H4V6H0z' : 'M7 2l6 11H1z'" /></svg>{{ r.diff }}</span></td>
              <td class="red">{{ r.rate }}</td><td>{{ r.vol }}</td><td class="red">{{ r.ratio }}</td><td></td>
            </tr>
            <tr class="ash"><td v-for="n in 7" :key="n"></td></tr>
            <tr class="sky"><td v-for="n in 7" :key="n"></td></tr>
            <tr class="ash"><td v-for="n in 7" :key="n"></td></tr>
            <tr class="tall"><td v-for="n in 7" :key="n"></td></tr>
          </tbody>
        </table>
      </div>
      <div class="hscroll"><button aria-label="왼쪽"><svg viewBox="0 0 10 10"><path d="M7 1L3 5l4 4" /></svg></button><div><i class="t1"></i></div><button aria-label="오른쪽"><svg viewBox="0 0 10 10"><path d="M3 1l4 4-4 4" /></svg></button></div>
      <div class="mark mark-high"></div>
    </section>
  </div>
</template>

<style>
body { margin: 0; }
</style>

<style scoped>
.desktop, .desktop * { box-sizing: border-box; }
.desktop {
  position: relative; min-height: 100vh; overflow: hidden; background: #3d414b;
  font: 16px/20px "Noto Sans CJK KR", sans-serif; color: #1a1a1a; white-space: nowrap;
}
button, input, select { font: inherit; color: inherit; margin: 0; }
button { padding: 0; border: 0; background: none; }
h1, h2, dl, dd { margin: 0; font: inherit; }
h1 { font-size: 15px; }
svg { display: block; }
.red { color: #e8281c; }
.blue { color: #1c50c8; }
.mark { position: absolute; border: 3px solid #fb0000; pointer-events: none; }

.win { position: absolute; background: #d0d0d0; }
.bar { display: flex; align-items: center; }
.ctl { display: flex; align-items: center; gap: 7px; margin-left: auto; }
.ctl button { width: 16px; height: 20px; line-height: 20px; }
.ctl .slim { width: 8px; }
.ctl svg { width: 16px; height: 16px; fill: none; stroke: currentColor; stroke-width: 2; }
.ctl .slim svg { width: 8px; }
.ctl .fill { fill: currentColor; stroke: none; }
.ctl .thick { stroke-width: 3; }
.ctl .thin { stroke-width: 1; }
.ctl .serif { width: 14px; font: bold 21px/20px "Liberation Serif", serif; }
.ctl .quest { width: 14px; font: bold 19px/20px "DejaVu Sans", sans-serif; }
.ctl .sep { width: 1px; height: 18px; background: currentColor; opacity: .6; }

.tb {
  height: 24px; border: 1px solid #8d8d8d; background: #efefef; display: flex; align-items: center;
  justify-content: center; overflow: hidden; flex: none; color: #222;
}
.tb svg { width: 18px; height: 18px; fill: none; stroke: #5a5a5a; stroke-width: 2; flex: none; }
.tb svg .fill { fill: #5a5a5a; stroke: none; }
.tb svg .soft { fill: #a5a5a5; stroke: none; }
.tb svg .hair { stroke-width: 1; }
.tb svg .gear { stroke-width: 3; }
.tb.on { background: #4f82c2; color: #fff; }
.tb.dim { color: #8a8a8a; }
.nums .tb { font-size: 14px; }
.joined { display: flex; }
.joined > * + * { margin-left: -1px; }
.w12 { width: 13px; } .w23 { width: 23px; } .w24 { width: 25px; }
.w44 { width: 46px; } .w48 { width: 48px; } .w84 { width: 84px; } .w86 { width: 86px; } .w94 { width: 93px; }
.w100 { width: 100px; } .w103 { width: 103px; } .w130 { width: 130px; }
.down { border: 4px solid transparent; border-top: 5px solid #555; border-bottom: 0; }
.box { height: 24px; border: 1px solid #8d8d8d; background: #fff; padding: 0 4px; flex: none; outline: 0; }
.sel { position: relative; display: flex; height: 24px; border: 1px solid #8d8d8d; background: #fff; overflow: hidden; flex: none; }
.sel select { appearance: none; border: 0; background: none; width: 100%; padding: 0 0 0 3px; margin-right: 17px; outline: 0; text-overflow: clip; opacity: 1; }
.sel i { position: absolute; right: 0; top: 0; bottom: 0; width: 17px; background: #efefef; border-left: 1px solid #8d8d8d; }
.sel i::after { content: ""; position: absolute; left: 3px; top: 9px; border: 5px solid transparent; border-top: 6px solid #666; border-bottom: 0; }
.sel.off { background: #efefef; }
.sel.off i::after { border-top-color: #aaa; }
.sel.etf { font-size: 14px; }
.row { display: flex; gap: 3px; align-items: center; }
.group { height: 24px; border: 1px solid #9a9a9a; background: #f2f2f2; display: flex; align-items: center; padding: 0 4px; flex: none; overflow: hidden; }
.group label { display: flex; align-items: center; gap: 3px; }
input[type=radio] { appearance: none; width: 15px; height: 15px; border: 1px solid #666; border-radius: 50%; background: #fff; flex: none; }
input[type=radio]:checked { background: radial-gradient(circle, #444 0 4px, #fff 5px); }

/* chart window */
.chart-win { inset: 0 0 0 5px; border-top: 2px solid #4a4e55; border-right: 4px solid #9a9a9a; border-bottom: 3px solid #9a9a9a; display: flex; flex-direction: column; }
.chart-title { height: 31px; background: #999ca1; color: #f4f4f4; padding: 0 3px 0 359px; }
.chart-title .ctl { color: #dcdcdc; }
.toolbar { display: flex; gap: 2px; padding: 7px 0 5px 353px; }
.toolbar .name { width: 101px; font-size: 15px; }
.toolbar .count { width: 38px; text-align: right; padding: 0 2px; font-size: 15px; }
.total { color: #555; line-height: 24px; width: 41px; font-size: 14px; }
.toolbar .date { width: 81px; padding: 0 3px; font-size: 14px; }
.info-row { display: flex; gap: 3px; padding: 0 0 5px 353px; }
.info { display: grid; grid-template-columns: 35px 229px 187px 305px; height: 24px; border: 1px solid #8d8d8d; background: #efefef; line-height: 22px; }
.info > div { display: flex; padding: 0 4px 0 3px; border-right: 1px solid #c4c4c4; }
.info > div:last-child { border: 0; }
.info dd { font-size: 15px; }
.info .c1 { justify-content: flex-end; padding-right: 2px; font-size: 14px; }
.c2 dd { width: 62px; text-align: right; }
.c2 dd:nth-of-type(1) { margin-left: auto; }
.c3 { justify-content: space-between; }
.c4 { gap: 12px; }
.c4 dd { width: 62px; }
.trade { width: 49px; height: 24px; border: 1px solid #8d8d8d; }
.buy { background: #f4d0ca; }
.sell { background: #c5dcf2; }

.chart {
  position: relative; flex: 1; display: grid; grid-template: minmax(0, 1fr) 22px / minmax(0, 1fr) 81px;
  margin: 0 4px 0 366px; min-height: 0; border-right: 1px solid #999;
}
.plot, .axis { position: relative; overflow: hidden; border-top: 1px solid #8a8a8a; }
.plot { background: #fff; }
.plot > svg, .axis > svg { position: absolute; inset: 0; width: 100%; height: 100%; }
.plot polyline, .plot path { fill: none; }
.crisp { shape-rendering: crispEdges; }
.grid { stroke: #dcdcdc; }
.midline { stroke: #9a9a9a; }
.seam { stroke: #909090; }
.dash { stroke: #555; stroke-dasharray: 4 3; }
.mag { fill: #ff00ff; }
.cyan { fill: #00c8ff; }
.yel { fill: #ffff00; }
.up { fill: #ee1c10; }
.dn { fill: #135ccc; }
.adr { stroke: #b9b0ea; stroke-width: 1.4; }
.m5 { stroke: #111; stroke-width: 1; }
.m20 { stroke: #f0b000; stroke-width: 2.6; }
.m60 { stroke: #2440bc; stroke-width: 1.2; }
.m112 { stroke: #0f9b38; stroke-width: 2.4; }
.m224 { stroke: #333; stroke-width: 2.6; }
.last { stroke: #ff0030; }
.vline { stroke: #f02020; }
.vavg { stroke: #000; stroke-width: 2.2; }
.brun { stroke: #1616ff; stroke-width: 1.4; }
.rrun { stroke: #ff2020; stroke-width: 1.2; }
.rblack { stroke: #222; stroke-width: 1; }
.rorange { stroke: #ff9a00; stroke-width: 2.4; }
.norange { stroke: #ff7a20; stroke-width: 1.2; }
.legend { position: absolute; display: flex; align-items: center; gap: 8px; line-height: 18px; color: #333; }
.legend i { width: 6px; height: 7px; border: 1px solid #777; background: #bbb; }
.main-legend { left: 3px; top: 40px; font-size: 15px; }
.l60 { color: #1c38b8; } .l20 { color: #f0b000; } .l112 { color: #109a3a; }
.ladr { color: #b9b0ea; } .llend { color: #00f000; } .lshort { color: #ffcb9a; }
.vol-note { position: absolute; right: 1px; top: 50%; color: #444; line-height: 20px; margin-top: -10px; font-size: 14px; }
.net-note { position: absolute; right: 77.200%; top: 92%; color: #e8281c; line-height: 20px; }
.axis { background: #d6e1ef; border-left: 1px solid #8f9296; }
.tick { stroke: #888; }
.lab { position: absolute; left: 10px; line-height: 18px; transform: translateY(-50%); color: #555; font-size: 14px; }
.lab.edge { left: 0; }
.lab.red, .lab.rate { color: #e8281c; }
.lab.blue { color: #1c62d0; }
.lab.rate { background: #d6e1ef; line-height: 14px; right: 4px; }
.tag { position: absolute; left: 5px; right: 2px; height: 16px; line-height: 16px; padding-left: 5px; transform: translateY(-50%); color: #fff; font-size: 14px; }
.tag-red { background: #e8180c; }
.tag-blue { background: #135ccc; }
.tag-yellow { background: #ffdb70; color: #555; border: 1px solid #222; height: 21px; line-height: 19px; padding-left: 11px; }
.mini-x { position: absolute; right: 3px; width: 10px; height: 9px; background: #444; transform: translateY(-50%); }
.mini-x svg { width: 10px; height: 9px; stroke: #ddd; }
.dates, .today { position: relative; background: #d6e1ef; border: 1px solid #909090; border-width: 1px 0; color: #555; line-height: 20px; font-size: 14px; }
.dates span { position: absolute; padding-left: 2px; border-left: 1px solid #909090; }
.today { border-left-width: 1px; padding-left: 9px; }
.mark-chart { right: -1px; width: 18.600%; top: 21.500%; height: 23.700%; }

.foot { display: flex; height: 24px; align-items: center; background: #efefef; margin-right: 4px; }
.track { flex: 1; height: 22px; background: #f7f7f7; display: flex; justify-content: flex-end; }
.thumb { width: 322px; height: 20px; background: #efefef; border: 1px solid #fff; border-right-color: #777; border-bottom: 2px solid #777; }
.play { display: flex; gap: 1px; }
.play button { width: 21px; height: 20px; border: 1px solid #fff; border-right-color: #777; border-bottom: 2px solid #777; }
.play svg { width: 16px; height: 16px; margin: auto; }
.slide { width: 87px; margin: 0 8px 0 7px; height: 20px; background: repeating-linear-gradient(90deg, #222 0 1px, transparent 1px 9px) 3px 100% / 82px 4px no-repeat; }
.slide input { appearance: none; width: 100%; height: 12px; display: block; background: linear-gradient(#999, #999) 0 50% / 100% 2px no-repeat; outline: 0; }
.slide input::-webkit-slider-thumb { appearance: none; width: 5px; height: 12px; background: #f2f2f2; border: 1px solid #999; border-right: 2px solid #777; }
.tools { display: flex; }
.tools button { width: 21px; height: 22px; display: flex; align-items: center; justify-content: center; color: #707070; }
.tools .pressed { background: #fff; border: 1px solid #aaa; border-width: 1px 0 0 1px; }
.tools svg { width: 18px; height: 18px; flex: none; fill: none; stroke: #707070; stroke-width: 1; }
.tools .fill { fill: #808080; stroke: none; }
.tools .thick { stroke: #606060; stroke-width: 3; }
.tools .letter { font: bold 18px/22px "DejaVu Sans", sans-serif; }

/* tables */
table { border-collapse: separate; border-spacing: 0; table-layout: fixed; width: 100%; background: #fff; }
th, td { padding: 0; border-right: 1px solid #b4b4b4; overflow: hidden; font-weight: normal; line-height: 18px; }
th { background: #dbe2ec; color: #333; border-bottom: 1px solid #b4b4b4; }
td { text-align: right; padding-right: 1px; font-size: 15px; }
td.nm { text-align: left; padding-left: 3px; font-size: 16px; }
.diff { display: flex; justify-content: space-between; align-items: center; padding: 0 2px; }
.diff svg { width: 14px; height: 14px; fill: #e8180c; }
.sky td { background: #c8e6f2; }
.ash td { background: #e5e5e5; }
.grid-box { border-left: 1px solid #999; border-top: 1px solid #999; }
.hscroll { display: flex; height: 20px; background: #efefef; }
.hscroll button { width: 20px; display: flex; align-items: center; justify-content: center; }
.hscroll svg { width: 12px; height: 12px; fill: none; stroke: #444; stroke-width: 2; }
.hscroll > div { flex: 1; }
.hscroll div i { display: block; height: 19px; background: #cdcdcd; }
.t1 { width: 60%; } .t2 { width: 66%; }

/* new high window */
.high-win { left: 3px; top: 283px; width: 553px; border: 4px solid #999; border-top-width: 1px; border-bottom-width: 5px; }
.high-title { height: 31px; background: #3a5592; color: #fff; margin: 0 -4px; padding: 0 7px 0 6px; }
.high-title .ctl { color: #a9b8dc; }
.no { width: 18px; height: 21px; border: 2px solid #dfe6f5; border-radius: 4px; background: #6f8ac4; font: bold 14px/17px "DejaVu Sans", sans-serif; text-align: center; margin-right: 6px; }
.high-win .r1 { padding: 3px 0 0 6px; }
.high-win .r2 { padding: 5px 0 0 8px; height: 35px; align-items: flex-start; line-height: 24px; color: #555; gap: 4px; border-bottom: 1px solid #aaa; }
.high-win .r2 .sel { color: #1a1a1a; }
.grow { flex: 1; }
.g4 { width: 189px; gap: 3px; padding: 0 3px; }
.g5 { flex: 1; gap: 11px; padding: 0 3px; font-size: 15px; }
.high-win .grid-box { margin: 5px 0 0 4px; }
.high th { height: 22px; position: relative; }
.high td { height: 24px; }
.high .tall td { height: 35px; }
.h0 { width: 112px; } .h1 { width: 75px; } .h2 { width: 82px; } .h3 { width: 62px; } .h4 { width: 94px; } .h5 { width: 112px; }
.sort { position: absolute; right: 2px; top: 4px; width: 14px; height: 14px; fill: none; stroke: #777; }
.mark-high { left: 2px; right: -4px; top: 120px; height: 80px; }

/* limit window */
.limit-win { left: 5px; top: 594px; width: 549px; border: 5px solid #999; border-width: 0 4px 4px; padding-left: 2px; }
.limit-win .second { padding: 8px 0 6px; border-bottom: 1px solid #aaa; }
.g1 { width: 191px; padding: 0 3px; }
.g2 { flex: 1; gap: 1px; }
.g3 { width: 361px; padding: 0 2px; gap: 4px; }
.limit-win .row { gap: 2px; }
.limit th { height: 22px; }
.limit td { height: 23px; }
.limit .sky td { height: 22px; }
.limit .tall td { height: 39px; }
.k0 { width: 25px; } .k1 { width: 100px; } .k2 { width: 68px; } .k3 { width: 66px; } .k4 { width: 52px; } .k5 { width: 81px; } .k6 { width: 80px; }
.tagcell b { display: block; width: 16px; height: 16px; margin: 0 0 0 5px; background: #93a63c; color: #fff; font-size: 14px; line-height: 16px; font-weight: normal; text-align: center; }
.mark-limit { left: 6px; right: 0; top: 84px; height: 55px; }

/* investor window */
.inv-win { left: 3px; top: 0; width: 368px; height: 284px; border: 5px solid #999; border-top-color: #999ca1; overflow: hidden; border-bottom-width: 2px; }
.inv-win .row { padding: 2px 0 0 2px; gap: 2px; font-size: 15px; }
.inv-win .sel { font-size: 14px; }
.inv-win .name { width: 90px; color: #444; padding: 0 3px; }
.inv-win .unit { width: 100px; padding: 0 3px; font-size: 16px; }
.mini { display: grid; grid-template: 220px 23px / minmax(0, 1fr) 58px; margin: 8px 0 0 1px; border-right: 1px solid #999; }
.mini-plot { position: relative; background: #fff; border: 1px solid #999; }
.mini-plot svg { width: 100%; height: 100%; fill: none; }
.grid3 { stroke: #d8d8d8; stroke-width: 3; }
.p-red { stroke: #ff0000; stroke-width: 10; }
.p-blue { stroke: #1010e8; stroke-width: 6; }
.p-green { stroke: #349a66; stroke-width: 5; }
.p-thin { stroke: #e02818; stroke-width: 5; }
.p-thinb { stroke: #2060c8; stroke-width: 5; stroke-dasharray: 20 24; }
.mini-legend { left: 4px; top: 1px; gap: 8px; }
.c-g { color: #349a66; } .c-r { color: #f01010; } .c-b { color: #1010e8; }
.mini-axis { position: relative; background: #d6e1ef; overflow: hidden; }
.mini-axis .lab { left: 7px; }
.mini-axis .lab.edge { left: -2px; }
.mini-axis .tag { left: 4px; right: 3px; }
.mini-date { background: #d6e1ef; border-top: 1px solid #aaa; line-height: 21px; padding-left: 2px; color: #555; overflow: hidden; font-size: 14px; }
.mini-time { border-left: 1px solid #999; padding-left: 9px; }
.mark-inv { left: -6px; top: 29px; width: 308px; height: 224px; }
</style>
